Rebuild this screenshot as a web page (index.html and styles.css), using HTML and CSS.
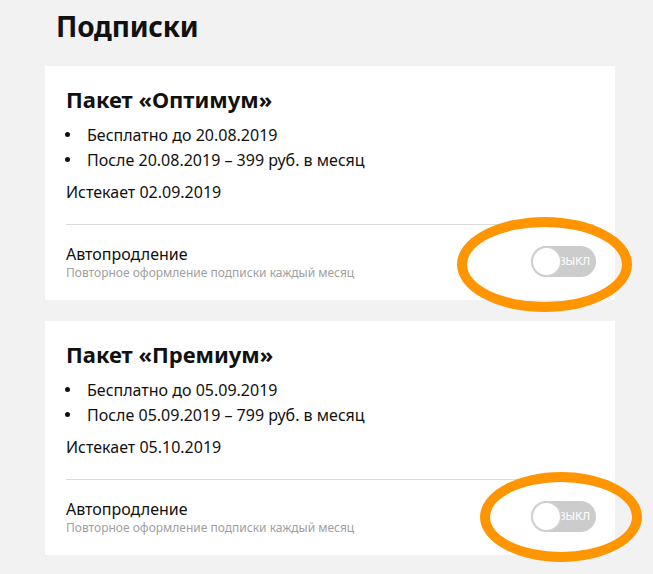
FILE: index.html
```html
<!DOCTYPE html>
<html lang="ru">
<head>
<meta charset="utf-8">
<title>Подписки</title>
<link rel="stylesheet" href="styles.css">
</head>
<body>
<main class="page">
  <h1 class="page-title">Подписки</h1>

  <section class="card">
    <h2 class="card-title">Пакет «Оптимум»</h2>
    <ul class="terms">
      <li>Бесплатно до 20.08.2019</li>
      <li>После 20.08.2019 – 399 руб. в месяц</li>
    </ul>
    <p class="expires">Истекает 02.09.2019</p>
    <div class="renew">
      <div class="renew-text">
        <div class="renew-label">Автопродление</div>
        <div class="renew-hint">Повторное оформление подписки каждый месяц</div>
      </div>
      <div class="toggle"><span class="knob"></span><span class="toggle-label">ВЫКЛ</span></div>
      <span class="mark mark-1"></span>
    </div>
  </section>

  <section class="card">
    <h2 class="card-title">Пакет «Премиум»</h2>
    <ul class="terms">
      <li>Бесплатно до 05.09.2019</li>
      <li>После 05.09.2019 – 799 руб. в месяц</li>
    </ul>
    <p class="expires">Истекает 05.10.2019</p>
    <div class="renew">
      <div class="renew-text">
        <div class="renew-label">Автопродление</div>
        <div class="renew-hint">Повторное оформление подписки каждый месяц</div>
      </div>
      <div class="toggle"><span class="knob"></span><span class="toggle-label">ВЫКЛ</span></div>
      <span class="mark mark-2"></span>
    </div>
  </section>
</main>
</body>
</html>
```

FILE: styles.css
```css
* { box-sizing: border-box; }

html, body {
  margin: 0;
  padding: 0;
  background: #f2f2f2;
}

body {
  font-family: "Noto Sans", "Open Sans", sans-serif;
  color: #111;
  overflow: hidden;
}

.page {
  width: 570px;
  margin-left: 45px;
  padding-top: 6px;
}

.page-title {
  margin: 0 0 20px 11px;
  font-size: 28px;
  line-height: 40px;
  font-weight: 700;
  letter-spacing: -0.2px;
}

.card {
  background: #fff;
  padding: 18px 21px 0 21px;
  height: 234px;
  margin-bottom: 21px;
}

.card-title {
  margin: 0 0 9px 0;
  font-size: 22px;
  line-height: 30px;
  font-weight: 700;
}

.terms {
  margin: 0;
  padding: 0;
  list-style: none;
  font-size: 16px;
  line-height: 25px;
}

.terms li::before {
  content: "";
  display: inline-block;
  width: 5px;
  height: 5px;
  border-radius: 50%;
  background: #111;
  margin: 0 17px 0 -1px;
  vertical-align: 4px;
}

.expires {
  margin: 7px 0 0 0;
  font-size: 16px;
  line-height: 25px;
  padding-bottom: 19px;
  border-bottom: 1px solid #dcdcdc;
}

.renew {
  position: relative;
  display: flex;
  align-items: center;
  justify-content: space-between;
  padding-top: 19px;
}

.renew-label {
  font-size: 16px;
  line-height: 20px;
}

.renew-hint {
  margin-top: 1px;
  font-size: 12px;
  line-height: 16px;
  color: #a0a0a0;
}

.toggle {
  position: relative;
  width: 65px;
  height: 31px;
  border-radius: 16px;
  background: #cccccc;
  display: flex;
  align-items: center;
  justify-content: flex-end;
  padding-right: 6px;
  margin-right: -2px;
  margin-bottom: 3px;
}

.knob {
  position: absolute;
  left: 0;
  top: 0;
  width: 31px;
  height: 31px;
  border-radius: 50%;
  background: #fff;
  border: 2px solid #d0d0d0;
}

.toggle-label {
  font-family: "Roboto", "Noto Sans", sans-serif;
  font-size: 11px;
  color: #fff;
}

.mark {
  position: absolute;
  border: 10px solid #ff9500;
  border-radius: 50%;
  pointer-events: none;
}

.mark-1 {
  left: 391px;
  top: -8px;
  width: 175px;
  height: 95px;
}

.mark-2 {
  left: 414px;
  top: -8px;
  width: 162px;
  height: 90px;
}
```
